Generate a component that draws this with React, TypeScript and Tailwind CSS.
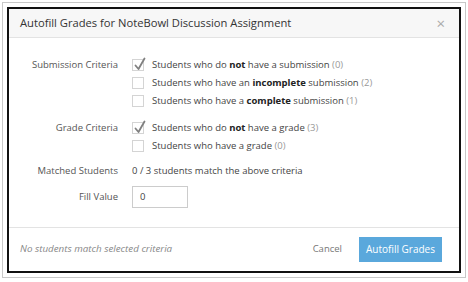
const Check = ({ checked }: { checked?: boolean }) => (
	<span className="relative w-[12px] h-[12px] border border-[#d4d4d4] bg-white shrink-0">
		{checked && (
			<svg className="absolute -top-[3px] left-[1px] w-[12px] h-[14px]" viewBox="0 0 12 14" fill="none">
				<path d="M1.5 8.5 L4.5 12 L10.5 1.5" stroke="#808080" strokeWidth="1.8" strokeLinecap="round" strokeLinejoin="round" />
			</svg>
		)}
	</span>
);

const Option = ({ checked, children, count }: { checked?: boolean; children: React.ReactNode; count: number }) => (
	<div className="flex items-center gap-[8px] h-[18px]">
		<Check checked={checked} />
		<span className="text-[#444]">
			{children} <span className="text-[#999]">({count})</span>
		</span>
	</div>
);

export default function App() {
	return (
		<div className="w-[468px] h-[282px] bg-white p-[2px]" style={{ fontFamily: '"Open Sans", sans-serif' }}>
			<div className="h-[276px] border border-[#c8c8c8] p-[4px] bg-white">
				<div className="h-[266px] border-2 border-[#111] bg-white flex flex-col text-[9.5px]">
					<div className="h-[29px] bg-[#f7f7f7] border-b border-[#e3e3e3] flex items-center justify-between pl-[11px] pr-[14px]">
						<span className="text-[11.2px] text-[#333]">Autofill Grades for NoteBowl Discussion Assignment</span>
						<span className="text-[15px] text-[#aaa] leading-none">×</span>
					</div>
					<div className="flex-1 pt-[18px]">
						<div className="grid grid-cols-[109px_1fr] gap-x-[14px]">
							<div className="text-right text-[#555] h-[18px] leading-[18px]">Submission Criteria</div>
							<div className="flex flex-col">
								<Option checked count={0}>
									Students who do <b className="font-bold text-[#222]">not</b> have a submission
								</Option>
								<Option count={2}>
									Students who have an <b className="font-bold text-[#222]">incomplete</b> submission
								</Option>
								<Option count={1}>
									Students who have a <b className="font-bold text-[#222]">complete</b> submission
								</Option>
							</div>
							<div className="text-right text-[#555] h-[18px] leading-[18px] mt-[9px]">Grade Criteria</div>
							<div className="flex flex-col mt-[9px]">
								<Option checked count={3}>
									Students who do <b className="font-bold text-[#222]">not</b> have a grade
								</Option>
								<Option count={0}>Students who have a grade</Option>
							</div>
							<div className="text-right text-[#555] h-[18px] leading-[18px] mt-[7px]">Matched Students</div>
							<div className="text-[#444] h-[18px] leading-[18px] mt-[7px]">0 / 3 students match the above criteria</div>
							<div className="text-right text-[#555] h-[22px] leading-[22px] mt-[6px]">Fill Value</div>
							<div className="mt-[6px]">
								<div className="w-[56px] h-[22px] border border-[#ccc] px-[7px] leading-[20px] text-[#444]">0</div>
							</div>
						</div>
					</div>
					<div className="h-[44px] border-t border-[#e3e3e3] flex items-center justify-between pl-[11px] pr-[17px]">
						<span className="italic text-[#888] text-[9.8px]">No students match selected criteria</span>
						<div className="flex items-center gap-[17px]">
							<span className="text-[#777]">Cancel</span>
							<div className="h-[25px] px-[7px] bg-[#5aa8dc] text-white text-[10px] flex items-center">Autofill Grades</div>
						</div>
					</div>
				</div>
			</div>
		</div>
	);
}
